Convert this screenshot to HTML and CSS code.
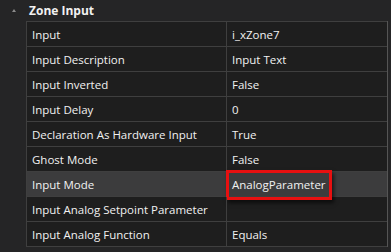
FILE: index.html
```html
<!DOCTYPE html>
<html lang="en">
<head>
  <meta charset="UTF-8">
  <title>Zone Input</title>
  <link rel="stylesheet" href="styles.css">
</head>
<body>
  <div class="panel">
    <div class="category">
      <span class="arrow"></span>
      <span class="category-name">Zone Input</span>
    </div>
    <div class="grid-wrap">
      <div class="grid">
        <div class="row"><div class="name">Input</div><div class="value">i_xZone7</div></div>
        <div class="row"><div class="name">Input Description</div><div class="value">Input Text</div></div>
        <div class="row"><div class="name">Input Inverted</div><div class="value">False</div></div>
        <div class="row"><div class="name">Input Delay</div><div class="value">0</div></div>
        <div class="row"><div class="name">Declaration As Hardware Input</div><div class="value">True</div></div>
        <div class="row"><div class="name">Ghost Mode</div><div class="value">False</div></div>
        <div class="row selected"><div class="name">Input Mode</div><div class="value">AnalogParameter<span class="callout"></span></div></div>
        <div class="row"><div class="name">Input Analog Setpoint Parameter</div><div class="value"></div></div>
        <div class="row"><div class="name">Input Analog Function</div><div class="value">Equals</div></div>
      </div>
      <div class="scroll"></div>
    </div>
  </div>
</body>
</html>
```

FILE: styles.css
```css
body {
  margin: 0;
  background-color: #252526;
  font-family: "Open Sans", "Noto Sans", sans-serif;
  font-size: 11.5px;
  color: #f1f1f1;
}
.panel {
  width: 391px;
  height: 252px;
  overflow: hidden;
}
.category {
  height: 21px;
  display: flex;
  align-items: center;
}
.arrow {
  width: 0;
  height: 0;
  margin-left: 12px;
  margin-right: 13px;
  border-left: 2px solid transparent;
  border-right: 2px solid transparent;
  border-bottom: 3px solid #8a8a8a;
}
.category-name {
  font-weight: bold;
  font-size: 12px;
}
.grid-wrap {
  display: flex;
  padding-left: 26px;
}
.grid {
  width: 360px;
  border-top: 1px solid #3f3f3f;
  border-left: 1px solid #3f3f3f;
}
.row {
  display: grid;
  grid-template-columns: 199px 1fr;
  height: 24px;
  border-bottom: 1px solid #3f3f3f;
  background-color: #1e1e1e;
}
.row.selected {
  background-color: #3c3c3d;
}
.name, .value {
  display: flex;
  align-items: center;
  padding-left: 5px;
  white-space: nowrap;
}
.value {
  border-left: 1px solid #3f3f3f;
  position: relative;
}
.callout {
  position: absolute;
  left: -1px;
  top: -2px;
  width: 100px;
  height: 24px;
  border: 3px solid #e81010;
  box-shadow: 2px 3px 4px rgba(0, 0, 0, 0.6);
}
.scroll {
  width: 3px;
  border-left: 1px solid #555555;
  background-color: #252526;
}
```
